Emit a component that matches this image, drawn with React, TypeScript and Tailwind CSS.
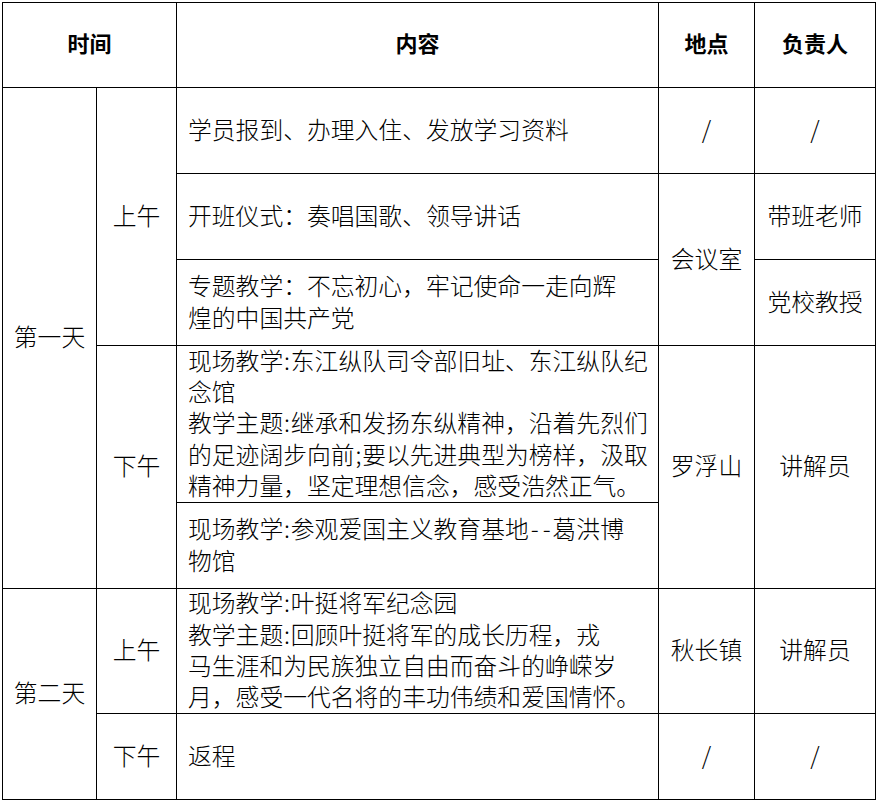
import React from "react";

const H = ({ c, w = "w-[0.32em]" }: { c: string; w?: string }) => (
  <span className={`inline-block text-center ${w}`}>{c}</span>
);

const Cell = ({
  className = "",
  children,
}: {
  className?: string;
  children?: React.ReactNode;
}) => (
  <div className={`bg-white flex items-center justify-center text-center pb-[4px] ${className}`}>
    {children}
  </div>
);

const Content = ({
  className = "",
  lines,
}: {
  className?: string;
  lines: React.ReactNode[];
}) => (
  <div className={`bg-white flex flex-col justify-center pl-[11px] pb-[4px] ${className}`}>
    {lines.map((l, i) => (
      <div key={i} className="whitespace-nowrap h-[31.3px] leading-[31.3px]">
        {l}
      </div>
    ))}
  </div>
);

export default function App() {
  return (
    <div className="w-[877px] h-[800px] bg-white overflow-hidden">
      <div
        className="ml-[2px] mt-[2px] w-[874px] grid grid-cols-[93px_79px_481px_95px_120px] grid-rows-[84px_85px_85px_85px_156px_85px_124px_85px] gap-px p-px bg-black text-black text-[23.8px] leading-[31.3px] font-light"
        style={{ fontFamily: '"Noto Sans CJK SC", "Noto Sans", sans-serif' }}
      >
        {/* header */}
        <Cell className="col-start-1 col-span-2 row-start-1 font-bold text-[22px]">时间</Cell>
        <Cell className="col-start-3 row-start-1 font-bold text-[22px]">内容</Cell>
        <Cell className="col-start-4 row-start-1 font-bold text-[22px]">地点</Cell>
        <Cell className="col-start-5 row-start-1 font-bold text-[22px]">负责人</Cell>

        {/* day 1 */}
        <Cell className="col-start-1 row-start-2 row-span-5">第一天</Cell>
        <Cell className="col-start-2 row-start-2 row-span-3">上午</Cell>
        <Cell className="col-start-2 row-start-5 row-span-2">下午</Cell>

        <Content className="col-start-3 row-start-2" lines={["学员报到、办理入住、发放学习资料"]} />
        <Cell className="col-start-4 row-start-2">/</Cell>
        <Cell className="col-start-5 row-start-2">/</Cell>

        <Content className="col-start-3 row-start-3" lines={["开班仪式：奏唱国歌、领导讲话"]} />
        <Cell className="col-start-4 row-start-3 row-span-2">会议室</Cell>
        <Cell className="col-start-5 row-start-3">带班老师</Cell>

        <Content
          className="col-start-3 row-start-4"
          lines={["专题教学：不忘初心，牢记使命一走向辉", "煌的中国共产党"]}
        />
        <Cell className="col-start-5 row-start-4">党校教授</Cell>

        <Content
          className="col-start-3 row-start-5"
          lines={[
            <>现场教学<H c=":" />东江纵队司令部旧址、东江纵队纪</>,
            "念馆",
            <>教学主题<H c=":" />继承和发扬东纵精神，沿着先烈们</>,
            <>的足迹阔步向前<H c=";" />要以先进典型为榜样，汲取</>,
            "精神力量，坚定理想信念，感受浩然正气。",
          ]}
        />
        <Cell className="col-start-4 row-start-5 row-span-2">罗浮山</Cell>
        <Cell className="col-start-5 row-start-5 row-span-2">讲解员</Cell>

        <Content
          className="col-start-3 row-start-6"
          lines={[
            <>现场教学<H c=":" />参观爱国主义教育基地<H c="-" w="w-[0.5em]" /><H c="-" w="w-[0.5em]" />葛洪博</>,
            "物馆",
          ]}
        />

        {/* day 2 */}
        <Cell className="col-start-1 row-start-7 row-span-2">第二天</Cell>
        <Cell className="col-start-2 row-start-7">上午</Cell>
        <Cell className="col-start-2 row-start-8">下午</Cell>

        <Content
          className="col-start-3 row-start-7"
          lines={[
            <>现场教学<H c=":" />叶挺将军纪念园</>,
            <>教学主题<H c=":" />回顾叶挺将军的成长历程，戎</>,
            "马生涯和为民族独立自由而奋斗的峥嵘岁",
            "月，感受一代名将的丰功伟绩和爱国情怀。",
          ]}
        />
        <Cell className="col-start-4 row-start-7">秋长镇</Cell>
        <Cell className="col-start-5 row-start-7">讲解员</Cell>

        <Content className="col-start-3 row-start-8" lines={["返程"]} />
        <Cell className="col-start-4 row-start-8">/</Cell>
        <Cell className="col-start-5 row-start-8">/</Cell>
      </div>
    </div>
  );
}
